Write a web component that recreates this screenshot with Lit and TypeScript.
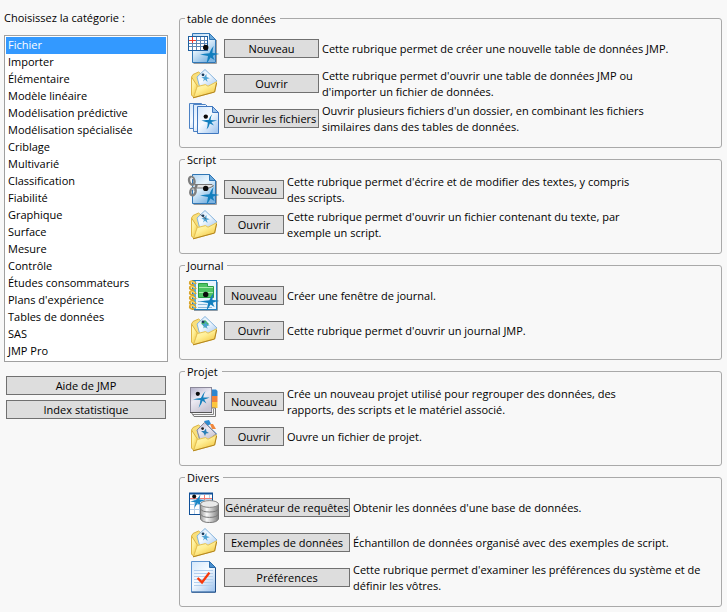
import { LitElement, html, svg, css } from "lit";
import { customElement, property } from "lit/decorators.js";

type Entry = { icon: string; label: string; text: string };
type Group = { title: string; size: string; entries: Entry[] };

const CATEGORIES = [
  "Fichier", "Importer", "Élémentaire", "Modèle linéaire", "Modélisation prédictive",
  "Modélisation spécialisée", "Criblage", "Multivarié", "Classification", "Fiabilité",
  "Graphique", "Surface", "Mesure", "Contrôle", "Études consommateurs",
  "Plans d'expérience", "Tables de données", "SAS", "JMP Pro",
];

const GROUPS: Group[] = [
  {
    title: "table de données", size: "medium", entries: [
      { icon: "table", label: "Nouveau", text: "Cette rubrique permet de créer une nouvelle table de données JMP." },
      { icon: "folder", label: "Ouvrir", text: "Cette rubrique permet d'ouvrir une table de données JMP ou\nd'importer un fichier de données." },
      { icon: "files", label: "Ouvrir les fichiers", text: "Ouvrir plusieurs fichiers d'un dossier, en combinant les fichiers\nsimilaires dans des tables de données." },
    ],
  },
  {
    title: "Script", size: "small", entries: [
      { icon: "script", label: "Nouveau", text: "Cette rubrique permet d'écrire et de modifier des textes, y compris\ndes scripts." },
      { icon: "folder-script", label: "Ouvrir", text: "Cette rubrique permet d'ouvrir un fichier contenant du texte, par\nexemple un script." },
    ],
  },
  {
    title: "Journal", size: "small", entries: [
      { icon: "journal", label: "Nouveau", text: "Créer une fenêtre de journal." },
      { icon: "folder-journal", label: "Ouvrir", text: "Cette rubrique permet d'ouvrir un journal JMP." },
    ],
  },
  {
    title: "Projet", size: "small", entries: [
      { icon: "project", label: "Nouveau", text: "Crée un nouveau projet utilisé pour regrouper des données, des\nrapports, des scripts et le matériel associé." },
      { icon: "folder-project", label: "Ouvrir", text: "Ouvre un fichier de projet." },
    ],
  },
  {
    title: "Divers", size: "large", entries: [
      { icon: "query", label: "Générateur de requêtes", text: "Obtenir les données d'une base de données." },
      { icon: "folder", label: "Exemples de données", text: "Échantillon de données organisé avec des exemples de script." },
      { icon: "prefs", label: "Préférences", text: "Cette rubrique permet d'examiner les préférences du système et de\ndéfinir les vôtres." },
    ],
  },
];

const defs = svg`<defs>
  <linearGradient id="page" x1="0" y1="0" x2="0.6" y2="1">
    <stop offset="0" stop-color="#b4d6f2"/><stop offset="0.45" stop-color="#eaf6fe"/><stop offset="1" stop-color="#7db4e2"/>
  </linearGradient>
  <linearGradient id="light" x1="0" y1="0" x2="0.8" y2="1">
    <stop offset="0" stop-color="#d3e7fb"/><stop offset="0.5" stop-color="#f6fbff"/><stop offset="1" stop-color="#a9caf0"/>
  </linearGradient>
  <linearGradient id="gold" x1="0" y1="0" x2="0.7" y2="1">
    <stop offset="0" stop-color="#fffcd0"/><stop offset="0.5" stop-color="#ffee94"/><stop offset="1" stop-color="#f2c53c"/>
  </linearGradient>
  <linearGradient id="cover" x1="0" y1="0" x2="0.5" y2="1">
    <stop offset="0" stop-color="#b4b1ca"/><stop offset="0.5" stop-color="#eceaf3"/><stop offset="1" stop-color="#c9c6d3"/>
  </linearGradient>
  <linearGradient id="metal" x1="0" y1="0" x2="1" y2="0">
    <stop offset="0" stop-color="#9a9a9a"/><stop offset="0.35" stop-color="#fafafa"/><stop offset="1" stop-color="#7e7e7e"/>
  </linearGradient>
</defs>`;

const runner = svg`
  <path d="M25.6 14Q24.6 18 24.4 21Q28 21.2 31.4 22Q27 22.8 24.8 23.8Q25.4 26 26.6 28Q24.2 26.8 22.6 25.4Q21 28.4 18.4 31.4Q19.6 27.4 20 24Q16 23.4 12 22.6Q16.4 21.6 21.4 21.2Q22.8 17 25.6 14Z" fill="#127fbe"/>
  <circle cx="17.7" cy="15.4" r="2.7" fill="#0a0a0a"/>`;

const sheet = svg`
  <path d="M5.5 31.5H28.5V8" fill="none" stroke="#9b9b9b"/>
  <path d="M4.5 1.5H21.5L27.5 7.5V30.5H4.5Z" fill="url(#page)" stroke="#2f76b5"/>
  <path d="M21.5 1.5V7.5H27.5Z" fill="#6aa9dc" stroke="#2f76b5"/>`;

const folder = (art: unknown) => svg`
  <path d="M3.5 10L5 7.5L10.5 5L13 7L24 14L20 24L4 29Z" fill="#f8df7c" stroke="#dcb445"/>
  <path d="M17 2.5L29 14L21 21H12L9 10Z" fill="url(#light)" stroke="#86b5dd"/>
  ${art}
  <path d="M3.5 10L9.4 19L6 30.4L3.5 28Z" fill="url(#gold)" stroke="#dcb445"/>
  <path d="M9.2 19.6L17.5 17.6L20 19.2L28.6 14.8L26.6 25L5.5 30.8Z" fill="url(#gold)" stroke="#e6c252"/>
  <path d="M5 30.8L26.6 25L28.6 16" fill="none" stroke="#b3851f"/>`;

const folderFigure = svg`
  <path d="M13.4 10.4L16.4 9.8L18.4 7L18.6 10L21.8 11.2L18.8 12L19.6 15L17 12.8L15 14.6L16 11.8Z" fill="#4da3d4"/>
  <circle cx="15" cy="7.8" r="1.4" fill="#183a5c"/>`;

const ICONS: Record<string, unknown> = {
  table: svg`${sheet}
    <rect x="0.5" y="4.5" width="19" height="14" fill="#fff" stroke="#1f5f9f"/>
    <path d="M4.5 5V18M8.5 5V18M12.5 5V18M16.5 5V18M1 8.5H19M1 11.5H19M1 14.5H19" stroke="#5d86b4"/>
    <path d="M4.5 5V11M1 8.5H8" stroke="#ee3a2c"/>${runner}`,
  files: svg`
    <path d="M1.5 1.5H13.5L17.5 5.5V26.5H1.5Z" fill="url(#light)" stroke="#4d82c4"/>
    <path d="M5.5 2.5H17.5L22.5 7.5V29.5H5.5Z" fill="url(#light)" stroke="#4d82c4"/>
    <path d="M9.5 4.5H24.5L30.5 10.5V31.5H9.5Z" fill="url(#light)" stroke="#3f77bf"/>
    <path d="M24.5 4.5V10.5H30.5Z" fill="#9cc4ec" stroke="#3f77bf"/>
    <path d="M24.4 12Q22.6 15 22.6 17.9Q26 17.9 29.2 18.4Q26 19.2 23.4 20L26 23.6L21.8 21.4Q21.2 24.6 18.6 27.4Q19.8 23.8 19.8 20.4Q16 19.4 13.4 18.4Q16.6 17.8 20.6 18Q22 14.4 24.4 12Z" fill="#127fbe"/>
    <circle cx="17.8" cy="14.6" r="2.2" fill="#0a0a0a"/>`,
  script: svg`${sheet}
    <path d="M7 11.5L24 11.5L25.5 13L21 15H8Z" fill="#e4e4e4" stroke="#777"/>
    <path d="M6 17.5L9 12" stroke="#777" stroke-width="2"/>
    <ellipse cx="3.8" cy="7.8" rx="2.6" ry="4" transform="rotate(-18 3.8 7.8)" fill="none" stroke="#808080" stroke-width="2.4"/>
    <ellipse cx="5" cy="18.6" rx="2.6" ry="3.8" transform="rotate(18 5 18.6)" fill="none" stroke="#808080" stroke-width="2.4"/>
    <path d="M2.4 5.6Q4 3.6 5 6M3.6 16.8Q5 14.6 6.4 16.8" fill="none" stroke="#ddd"/>${runner}`,
  journal: svg`
    <path d="M6 31.5H29.5V3" fill="none" stroke="#8d9aa6"/>
    <rect x="4.5" y="1.5" width="24" height="29" fill="#e8f5fe" stroke="#1e7fc0" stroke-width="1"/>
    <rect x="5" y="2" width="3" height="28" fill="#5badde"/>
    <path d="M10.5 4.5H19.5V7.5H25.5V18.5H10.5Z" fill="#4fc463" stroke="#2b9c46"/>
    <path d="M11 8.5H25M11 13.5H25" stroke="#a8ecae"/>
    <path d="M10 22.5H19M10 25.5H19M10 28.5H24" stroke="#8cb9da"/>
    ${[4, 9, 14, 19, 24, 28].map(y => svg`
      <path d=${`M8 ${y + 1}Q5 ${y - 3} 2 ${y - 1}Q1 ${y + 2} 6 ${y + 2}`} fill="none" stroke="#d9a52a" stroke-width="2"/>
      <path d=${`M7 ${y}Q5 ${y - 2} 2.5 ${y - 1}`} fill="none" stroke="#ffe27a"/>`)}
    ${runner}`,
  project: svg`
    <path d="M24 4.5H28L29.5 6V11H24Z" fill="#2c86cf"/>
    <path d="M24 11H29.5V17H24Z" fill="#f2823a"/>
    <path d="M24 17H29.5V23H24Z" fill="#fbc63d"/>
    <path d="M3 27L6 31.5H27.5V23H23Z" fill="#f7f7f7" stroke="#777"/>
    <path d="M4.5 29.5H25.5V24" fill="none" stroke="#888"/>
    <rect x="2.5" y="2.5" width="21" height="25" fill="url(#cover)" stroke="#8b8899"/>
    <path d="M2 27.5H24" stroke="#555"/>
    <path d="M17.5 6Q15.4 9.6 15.2 12.6L21.6 12.4Q18.6 13.6 16.2 14.6L18.4 18.6L14.6 15.8Q13.4 19.6 10.6 23Q12.2 18.6 12.4 15L5 14.4Q9 13.2 12.9 12.9Q14.6 9 17.5 6Z" fill="#1681bd"/>
    <circle cx="9.8" cy="8.8" r="2.1" fill="#0a0a0a"/>`,
  query: svg`
    <rect x="1.5" y="2.5" width="23" height="21" fill="#fff" stroke="#0f4f97"/>
    <path d="M1 2.5H25" stroke="#0f4f97" stroke-width="2"/>
    <path d="M6.5 4V23M11.5 4V23M16.5 4V23M21.5 4V23M2 8.5H24M2 13.5H24M2 18.5H24" stroke="#b7cfe8"/>
    <path d="M2 7.5H24M16.5 4V9" stroke="#f07b74"/>
    <path d="M12.4 4L11.4 8.6L17 9.4L12 11L13 14L9.4 12.4L6.4 17L7.4 11.2L2 10.4L8 9Z" fill="#1b87c6"/>
    <circle cx="6.2" cy="5.6" r="2" fill="#0a0a0a"/>
    <path d="M12.5 13V28Q14 31.5 21.5 31.5T30.5 28V13Z" fill="url(#metal)" stroke="#777"/>
    <path d="M12.5 18Q14 21 21.5 21T30.5 18M12.5 23Q14 26.4 21.5 26.4T30.5 23" fill="none" stroke="#777"/>
    <ellipse cx="21.5" cy="13" rx="9" ry="3.4" fill="#e9e9e9" stroke="#888"/>`,
  prefs: svg`
    <path d="M3.5 0.5H21.5L27.5 6.5V31H3.5Z" fill="url(#light)" stroke="#5b92cf"/>
    <path d="M3.5 31.2H27.5V7" fill="none" stroke="#1d4a82"/>
    <path d="M21.5 0.5V6.5H27.5Z" fill="#4a8fce" stroke="#2b6cab"/>
    <path d="M6 9.5H25M6 12.5H25M6 15.5H25M6 18.5H25M6 21.5H25M6 24.5H25" stroke="#b3d0ee"/>
    <path d="M9.6 17L14 21.4L21.4 11.6" fill="none" stroke="#f8380a" stroke-width="2.4"/>`,
  folder: folder(folderFigure),
  "folder-script": folder(svg`${folderFigure}<path d="M12.4 6.5L18 11" stroke="#4f5a66"/>`),
  "folder-journal": folder(svg`
    <path d="M13 9L17 6L21 10L17 14Z" fill="#49b866"/>${folderFigure}`),
  "folder-project": folder(svg`
    <path d="M16 1L21 0L23 4L19 6Z" fill="#2f8bd0"/>
    <path d="M22 4L25 4L28 9L24 9Z" fill="#f0883e"/>
    <path d="M16.5 2.5L28 14L20 20H12L9 10Z" fill="url(#cover)" stroke="#8c8999"/>
    <path d="M13 11L16 11L18 8.5L18.4 11.4L21 13L18 13.6L17 16L15.6 13Z" fill="#2a7fb6"/>
    <circle cx="14.6" cy="8.6" r="1.4" fill="#222"/>`),
};

@customElement("jmp-icon")
export class JmpIcon extends LitElement {
  @property() name = "";
  static styles = css`
    :host { display: block; flex: none; width: 32px; height: 32px; }
    .art { display: block; width: 100%; height: 100%; overflow: visible; }
  `;
  render() {
    return html`<svg class="art" viewBox="0 0 32 32" aria-hidden="true">${defs}${ICONS[this.name]}</svg>`;
  }
}

@customElement("app-root")
export class AppRoot extends LitElement {
  static styles = css`
    :host {
      display: flex;
      align-items: flex-start;
      gap: 11px;
      box-sizing: border-box;
      min-height: 100vh;
      padding: 10px 5px 5px 4px;
      background: #f8f8f8;
      color: #000;
      font: 11px/16px "Open Sans", "Noto Sans", sans-serif;
    }
    .side { display: flex; flex-direction: column; flex: 0 0 164px; }
    .caption { margin-bottom: 9px; }
    .list {
      box-sizing: border-box;
      width: 100%;
      height: 327px;
      margin: 0;
      padding: 1px;
      border: 1px solid #a0a0a0;
      border-radius: 0;
      outline: none;
      overflow: hidden;
      background: #fff;
      color: #000;
      font: inherit;
    }
    .choice {
      box-sizing: border-box;
      height: 17px;
      min-height: 17px;
      padding: 0 2px;
      line-height: 18px;
    }
    .choice:checked {
      background: linear-gradient(#3399ff, #3399ff);
      -webkit-text-fill-color: #fff;
    }
    .links { display: flex; flex-direction: column; gap: 5px; padding: 14px 2px 0; }
    .button {
      box-sizing: border-box;
      height: 19px;
      padding: 0;
      border: 1px solid #707070;
      border-radius: 0;
      background: #ddd;
      color: #000;
      font: inherit;
      line-height: 16px;
      text-align: center;
      white-space: nowrap;
    }
    .main { display: flex; flex-direction: column; flex: 1; gap: 3px; min-width: 0; }
    .group {
      min-width: 0;
      margin: 0;
      padding: 4px 8px 11px;
      border: 1px solid #a9a9a9;
      border-radius: 3px;
    }
    .title { margin-left: -3px; padding: 0 4px 0 2px; line-height: 17px; }
    .row { display: flex; align-items: center; height: 35px; }
    .row jmp-icon { margin-bottom: 1px; }
    .row .button { margin: 0 3px 0 4px; }
    .small { flex: 0 0 60px; }
    .medium { flex: 0 0 95px; }
    .large { flex: 0 0 126px; }
    .text { flex: 1; margin: 0; padding-top: 1px; white-space: pre-line; }
  `;

  render() {
    return html`
      <div class="side">
        <label class="caption" for="cat">Choisissez la catégorie :</label>
        <select class="list" id="cat" size="19">
          ${CATEGORIES.map((c, i) => html`<option class="choice" ?selected=${i === 0}>${c}</option>`)}
        </select>
        <div class="links">
          <button class="button">Aide de JMP</button>
          <button class="button">Index statistique</button>
        </div>
      </div>
      <div class="main">
        ${GROUPS.map(g => html`
          <fieldset class="group">
            <legend class="title">${g.title}</legend>
            ${g.entries.map(e => html`
              <div class="row">
                <jmp-icon name=${e.icon}></jmp-icon>
                <button class="button ${g.size}">${e.label}</button>
                <p class="text">${e.text}</p>
              </div>`)}
          </fieldset>`)}
      </div>
    `;
  }
}
